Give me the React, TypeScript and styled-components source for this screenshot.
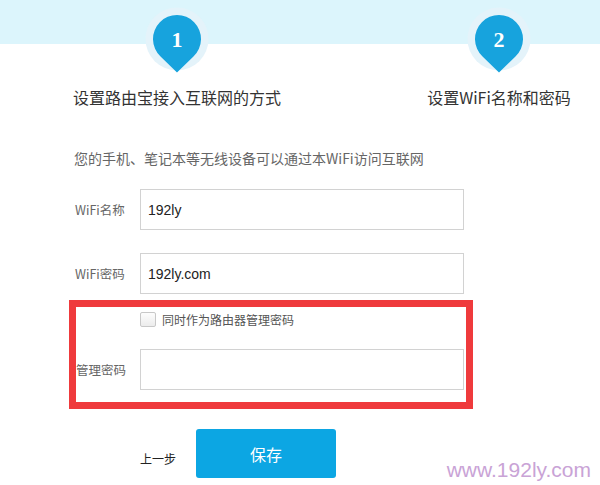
import React from "react";
import styled, { createGlobalStyle } from "styled-components";

const GlobalStyle = createGlobalStyle`
  html, body { margin: 0; padding: 0; background: #ffffff; }
  body { font-family: "Noto Sans CJK SC", "Liberation Sans", sans-serif; }
  * { box-sizing: border-box; }
`;

const Page = styled.div`
  position: relative;
  width: 600px;
  height: 485px;
  overflow: hidden;
  background: linear-gradient(to bottom, #dcf5fc 0, #dcf5fc 44px, #ffffff 44px);
`;

const StepsRow = styled.div`
  display: flex;
  padding-top: 7px;
`;

const Step = styled.div<{ $width: number; $offset: number }>`
  width: ${(p) => p.$width}px;
  margin-left: ${(p) => p.$offset}px;
  display: flex;
  flex-direction: column;
  align-items: center;
`;

const StepTitle = styled.div`
  margin-top: 12px;
  font-size: 16px;
  line-height: 24px;
  color: #333;
  white-space: nowrap;
`;

const Description = styled.div`
  margin: 39px 0 0 74px;
  font-size: 14px;
  line-height: 20px;
  color: #666;
`;

const Form = styled.div`
  margin-left: 69px;
  display: flex;
  flex-direction: column;
`;

const Row = styled.div<{ $labelCol: number; $top: number; $pad: number }>`
  display: grid;
  grid-template-columns: ${(p) => p.$labelCol}px 324px;
  align-items: center;
  margin-top: ${(p) => p.$top}px;
  padding-left: ${(p) => p.$pad}px;
`;

const Label = styled.div`
  font-size: 12.5px;
  color: #666;
  white-space: nowrap;
`;

const Input = styled.div`
  height: 41px;
  border: 1px solid #d2d2d2;
  background: #fff;
  display: flex;
  align-items: center;
  padding-left: 7px;
  font-family: "Liberation Sans", Arial, sans-serif;
  font-size: 14px;
  color: #222;
`;

const Highlight = styled.div`
  margin-top: 6px;
  width: 404px;
  border: 7px solid #ef3a3c;
  padding: 5px 0 12px;
  display: flex;
  flex-direction: column;
`;

const CheckRow = styled.label`
  display: flex;
  align-items: center;
  gap: 6px;
  margin-left: 64px;
  font-size: 12px;
  color: #555;
  line-height: 15px;
`;

const Check = styled.span`
  width: 16px;
  height: 15px;
  border: 1px solid #c8c8c8;
  border-radius: 2px;
  background: linear-gradient(to bottom, #fdfdfd, #ececec);
`;

const Actions = styled.div`
  display: flex;
  align-items: center;
  gap: 20px;
  margin: 20px 0 0 140px;
`;

const Back = styled.span`
  margin-top: 9px;
  font-size: 12px;
  color: #222;
  width: 36px;
  white-space: nowrap;
`;

const SaveButton = styled.button`
  width: 140px;
  height: 49px;
  border: none;
  border-radius: 3px;
  background: #0ca6e3;
  color: #ffffff;
  font-family: "Noto Sans CJK SC", sans-serif;
  font-size: 16px;
  padding: 0;
`;

const Watermark = styled.div`
  position: absolute;
  right: 9px;
  bottom: 3px;
  font-family: "Liberation Sans", Arial, sans-serif;
  font-size: 21px;
  color: #c9a3d6;
`;

function Marker({ n }: { n: number }) {
  return (
    <svg width="64" height="66" viewBox="0 0 64 66">
      <circle cx="32" cy="32" r="31.5" fill="#e4f3fa" />
      <path d="M15.54 49.46 A24 24 0 1 1 48.46 49.46 L32 65.5 Z" fill="#17a3dd" />
      <text
        x="32"
        y="40"
        textAnchor="middle"
        fontFamily="'Liberation Serif', serif"
        fontWeight="bold"
        fontSize="22"
        fill="#ffffff"
      >
        {n}
      </text>
    </svg>
  );
}

export default function App() {
  return (
    <>
      <GlobalStyle />
      <Page>
        <StepsRow>
          <Step $width={354} $offset={0}>
            <Marker n={1} />
            <StepTitle>设置路由宝接入互联网的方式</StepTitle>
          </Step>
          <Step $width={202} $offset={44}>
            <Marker n={2} />
            <StepTitle>设置WiFi名称和密码</StepTitle>
          </Step>
        </StepsRow>
        <Description>您的手机、笔记本等无线设备可以通过本WiFi访问互联网</Description>
        <Form>
          <Row $labelCol={65} $top={21} $pad={6}>
            <Label>WiFi名称</Label>
            <Input>192ly</Input>
          </Row>
          <Row $labelCol={65} $top={23} $pad={6}>
            <Label>WiFi密码</Label>
            <Input>192ly.com</Input>
          </Row>
          <Highlight>
            <CheckRow>
              <Check />
              同时作为路由器管理密码
            </CheckRow>
            <Row $labelCol={64} $top={22} $pad={0}>
              <Label>管理密码</Label>
              <Input />
            </Row>
          </Highlight>
        </Form>
        <Actions>
          <Back>上一步</Back>
          <SaveButton>保存</SaveButton>
        </Actions>
        <Watermark>www.192ly.com</Watermark>
      </Page>
    </>
  );
}
